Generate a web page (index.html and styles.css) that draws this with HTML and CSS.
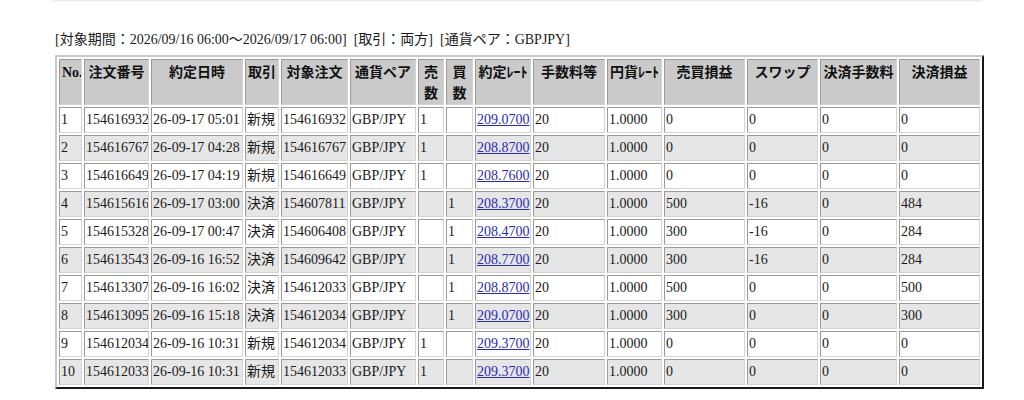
FILE: index.html
```html
<!DOCTYPE html>
<html lang="ja">
<head>
<meta charset="utf-8">
<title>約定履歴</title>
<link rel="stylesheet" href="styles.css">
</head>
<body>
<div class="topbar"></div>
<div class="page">
  <p class="cond">[対象期間：2026/09/16 06:00〜2026/09/17 06:00]&nbsp; [取引：両方]&nbsp; [通貨ペア：GBPJPY]</p>
  <table class="trades">
    <colgroup>
      <col class="c-no"><col class="c-order"><col class="c-date"><col class="c-kind"><col class="c-target"><col class="c-pair"><col class="c-sell"><col class="c-buy"><col class="c-rate"><col class="c-fee"><col class="c-yen"><col class="c-pl"><col class="c-swap"><col class="c-sfee"><col class="c-spl">
    </colgroup>
    <thead>
      <tr>
        <th>No.</th><th>注文番号</th><th>約定日時</th><th>取引</th><th>対象注文</th><th>通貨ペア</th><th>売数</th><th>買数</th><th>約定ﾚｰﾄ</th><th>手数料等</th><th>円貨ﾚｰﾄ</th><th>売買損益</th><th>スワップ</th><th>決済手数料</th><th>決済損益</th>
      </tr>
    </thead>
    <tbody>
      <tr><td>1</td><td>154616932</td><td>26-09-17 05:01</td><td>新規</td><td>154616932</td><td>GBP/JPY</td><td>1</td><td></td><td><a href="#">209.0700</a></td><td>20</td><td>1.0000</td><td>0</td><td>0</td><td>0</td><td>0</td></tr>
      <tr><td>2</td><td>154616767</td><td>26-09-17 04:28</td><td>新規</td><td>154616767</td><td>GBP/JPY</td><td>1</td><td></td><td><a href="#">208.8700</a></td><td>20</td><td>1.0000</td><td>0</td><td>0</td><td>0</td><td>0</td></tr>
      <tr><td>3</td><td>154616649</td><td>26-09-17 04:19</td><td>新規</td><td>154616649</td><td>GBP/JPY</td><td>1</td><td></td><td><a href="#">208.7600</a></td><td>20</td><td>1.0000</td><td>0</td><td>0</td><td>0</td><td>0</td></tr>
      <tr><td>4</td><td>154615616</td><td>26-09-17 03:00</td><td>決済</td><td>154607811</td><td>GBP/JPY</td><td></td><td>1</td><td><a href="#">208.3700</a></td><td>20</td><td>1.0000</td><td>500</td><td>-16</td><td>0</td><td>484</td></tr>
      <tr><td>5</td><td>154615328</td><td>26-09-17 00:47</td><td>決済</td><td>154606408</td><td>GBP/JPY</td><td></td><td>1</td><td><a href="#">208.4700</a></td><td>20</td><td>1.0000</td><td>300</td><td>-16</td><td>0</td><td>284</td></tr>
      <tr><td>6</td><td>154613543</td><td>26-09-16 16:52</td><td>決済</td><td>154609642</td><td>GBP/JPY</td><td></td><td>1</td><td><a href="#">208.7700</a></td><td>20</td><td>1.0000</td><td>300</td><td>-16</td><td>0</td><td>284</td></tr>
      <tr><td>7</td><td>154613307</td><td>26-09-16 16:02</td><td>決済</td><td>154612033</td><td>GBP/JPY</td><td></td><td>1</td><td><a href="#">208.8700</a></td><td>20</td><td>1.0000</td><td>500</td><td>0</td><td>0</td><td>500</td></tr>
      <tr><td>8</td><td>154613095</td><td>26-09-16 15:18</td><td>決済</td><td>154612034</td><td>GBP/JPY</td><td></td><td>1</td><td><a href="#">209.0700</a></td><td>20</td><td>1.0000</td><td>300</td><td>0</td><td>0</td><td>300</td></tr>
      <tr><td>9</td><td>154612034</td><td>26-09-16 10:31</td><td>新規</td><td>154612034</td><td>GBP/JPY</td><td>1</td><td></td><td><a href="#">209.3700</a></td><td>20</td><td>1.0000</td><td>0</td><td>0</td><td>0</td><td>0</td></tr>
      <tr><td>10</td><td>154612033</td><td>26-09-16 10:31</td><td>新規</td><td>154612033</td><td>GBP/JPY</td><td>1</td><td></td><td><a href="#">209.3700</a></td><td>20</td><td>1.0000</td><td>0</td><td>0</td><td>0</td><td>0</td></tr>
    </tbody>
  </table>
</div>
</body>
</html>
```

FILE: styles.css
```css
html, body {
  margin: 0;
  padding: 0;
  background: #ffffff;
}

body {
  font-family: "Liberation Serif", "Noto Sans CJK JP", serif;
  font-size: 14px;
  color: #1a1a1a;
}

.topbar {
  margin-left: 52px;
  width: 930px;
  height: 1px;
  background: #ececec;
  box-shadow: 0 1px 1px #f4f4f4;
}

.page {
  padding: 0 0 0 55px;
}

.cond {
  margin: 31px 0 0 0;
  line-height: 16px;
  white-space: nowrap;
}

.trades {
  margin-top: 7px;
  width: 929px;
  table-layout: fixed;
  border-collapse: separate;
  border-spacing: 2px;
  border: 2px outset #a0a0a0;
  border-right-color: #6e6e6e;
  border-bottom-color: #6e6e6e;
  border-top-color: #c8c8c8;
  border-left-color: #c8c8c8;
}

.c-no { width: 23px; }
.c-order { width: 65px; }
.c-date { width: 92px; }
.c-kind { width: 34px; }
.c-target { width: 67px; }
.c-pair { width: 66px; }
.c-sell { width: 26px; }
.c-buy { width: 27px; }
.c-rate { width: 56px; }
.c-fee { width: 72px; }
.c-yen { width: 55px; }
.c-pl { width: 81px; }
.c-swap { width: 71px; }
.c-sfee { width: 77px; }
.c-spl { width: 81px; }

.trades th,
.trades td {
  border: 1px solid #9a9a9a;
  border-right-color: #d4d4d4;
  border-bottom-color: #d4d4d4;
  padding: 1px 2px 1px 2px;
  overflow: hidden;
}

.trades th {
  background: #cacaca;
  font-weight: bold;
  text-align: center;
  vertical-align: top;
  line-height: 21px;
  padding-top: 2px;
  padding-bottom: 0;
  color: #111;
}

.trades td {
  text-align: left;
  vertical-align: middle;
  line-height: 22px;
  white-space: nowrap;
  padding-left: 1px;
}

.trades tbody tr:nth-child(odd) td {
  background: #ffffff;
}

.trades tbody tr:nth-child(even) td {
  background: #e6e6e6;
}

.trades a {
  color: #2a2ab8;
  text-decoration: underline;
}
```
